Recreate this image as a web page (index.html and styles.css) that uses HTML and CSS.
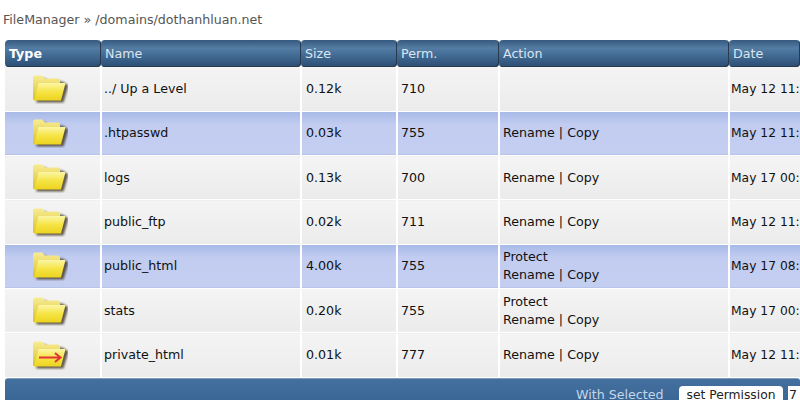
FILE: index.html
```html
<!DOCTYPE html>
<html lang="en">
<head>
<meta charset="utf-8">
<title>FileManager</title>
<link rel="stylesheet" href="styles.css">
</head>
<body>
<svg class="defs" width="0" height="0" aria-hidden="true">
  <defs>
    <linearGradient id="back" x1="0" y1="0" x2="0" y2="1"><stop offset="0" stop-color="#f8ec94"/><stop offset="1" stop-color="#d8c028"/></linearGradient>
    <linearGradient id="front" x1="0" y1="0" x2="0" y2="1"><stop offset="0" stop-color="#fbf6a6"/><stop offset=".5" stop-color="#f6e445"/><stop offset="1" stop-color="#ecd31e"/></linearGradient>
    <filter id="soft" x="-20%" y="-20%" width="140%" height="140%"><feGaussianBlur stdDeviation="1.1"/></filter>
    <symbol id="folder" viewBox="0 0 36 30">
      <path d="M3 6 L4 3 H12 L15 6 H29 L35 10 L30 27 H3 Z" fill="#3f3620" opacity=".8" filter="url(#soft)" transform="translate(1.500 1.500)"/>
      <path d="M1 4 Q1 1.500 3 1.500 H10 L13 4.500 H26 Q28 4.500 28 6.500 V12 H6 L4 26 H2 Q1 26 1 25 Z" fill="url(#back)"/>
      <path d="M6.500 9 H33.500 L29 26.500 H2 Z" fill="url(#front)"/>
    </symbol>
  </defs>
</svg>
<main class="manager">
  <p class="crumb">FileManager » /domains/dothanhluan.net</p>
  <table class="files">
    <colgroup>
      <col class="c-type"><col class="c-name"><col class="c-size"><col class="c-perm"><col class="c-action"><col class="c-date">
    </colgroup>
    <thead>
      <tr><th class="type-head">Type</th><th>Name</th><th>Size</th><th>Perm.</th><th>Action</th><th>Date</th></tr>
    </thead>
    <tbody>
      <tr class="plain"><td class="icon"><svg class="folder"><use href="#folder"/></svg></td><td>../ Up a Level</td><td>0.12k</td><td>710</td><td></td><td>May 12 11:</td></tr>
      <tr class="picked"><td class="icon"><svg class="folder"><use href="#folder"/></svg></td><td>.htpasswd</td><td>0.03k</td><td>755</td><td>Rename | Copy</td><td>May 12 11:</td></tr>
      <tr class="plain"><td class="icon"><svg class="folder"><use href="#folder"/></svg></td><td>logs</td><td>0.13k</td><td>700</td><td>Rename | Copy</td><td>May 17 00:</td></tr>
      <tr class="plain"><td class="icon"><svg class="folder"><use href="#folder"/></svg></td><td>public_ftp</td><td>0.02k</td><td>711</td><td>Rename | Copy</td><td>May 12 11:</td></tr>
      <tr class="picked"><td class="icon"><svg class="folder"><use href="#folder"/></svg></td><td>public_html</td><td>4.00k</td><td>755</td><td>Protect<br>Rename | Copy</td><td>May 17 08:</td></tr>
      <tr class="plain"><td class="icon"><svg class="folder"><use href="#folder"/></svg></td><td>stats</td><td>0.20k</td><td>755</td><td>Protect<br>Rename | Copy</td><td>May 17 00:</td></tr>
      <tr class="plain"><td class="icon"><svg class="folder" viewBox="0 0 36 30"><use href="#folder" width="36" height="30"/><path class="arrow" d="M7 17.500 H28 M23 13 L28.500 17.500 L23 22"/></svg></td><td>private_html</td><td>0.01k</td><td>777</td><td>Rename | Copy</td><td>May 12 11:</td></tr>
    </tbody>
  </table>
  <div class="footer">
    <span class="with">With Selected</span>
    <button class="btn" type="button">set Permission</button>
    <input class="perm" type="text" value="7" aria-label="Permission">
  </div>
</main>
</body>
</html>
```
FILE: styles.css
```css
html, body { margin: 0; height: 400px; overflow: hidden; background: #fff; }
.defs { position: absolute; }
.manager { width: 795px; padding: 0 0 0 5px; font: 12.65px/18px "DejaVu Sans", sans-serif; color: #111; }
.crumb { margin: 0 0 0 -2px; padding-top: 11px; height: 40px; box-sizing: border-box; color: #555; }
.files { table-layout: fixed; width: 795px; border-collapse: collapse; }
.c-type { width: 96px; }
.c-name { width: 200px; }
.c-size { width: 96px; }
.c-perm { width: 102px; }
.c-action { width: 230px; }
.c-date { width: 71px; }
th { height: 27px; padding: 0 0 0 4px; text-align: left; font-weight: 400; color: #dbe5ef; background: linear-gradient(#35597f, #557ca3 30%, #46709a 50%, #2b4d73); border-radius: 4px; box-shadow: inset -1px -1px 0 #2a3a4c; box-sizing: border-box; }
.type-head { font-weight: 700; color: #fff; }
td { height: 44.3px; padding: 0 0 0 3px; border-left: 2px solid #fff; border-bottom: 1px solid #fff; box-sizing: border-box; white-space: nowrap; }
td:first-child { border-left: 0; }
td:nth-child(2) { padding-left: 2px; }
td:nth-child(3) { padding-left: 4px; }
td:last-child { padding-left: 1px; font-size: 12.3px; }
.plain td { background: linear-gradient(#f4f4f4, #ebebeb); }
.picked td { background: linear-gradient(#a6b9e6, #c1ccf0 30%, #c4cef1); }
td.icon { padding: 0 5px 0 0; text-align: center; }
.folder { display: block; width: 36px; height: 30px; margin: 0 auto; }
.arrow { fill: none; stroke: #e23438; stroke-width: 2; }
.footer { display: flex; align-items: flex-start; height: 22px; overflow: hidden; padding: 7px 0 0 571px; box-sizing: border-box; border-top: 1px solid #7f9ab6; background: linear-gradient(#43709f, #3a6796); border-radius: 3px 3px 0 0; }
.with { flex: none; width: 86px; color: #c5d6e8; white-space: nowrap; }
.btn { flex: none; margin: 0 0 0 17px; padding: 0; width: 104px; height: 18px; border: 0; border-radius: 4px 4px 0 0; background: #fff; font: inherit; font-size: 12.3px; line-height: 18px; color: #222; }
.perm { flex: none; margin-left: 5px; width: 12px; height: 18px; padding: 0 0 0 1px; border: 0; box-sizing: border-box; font: inherit; color: #222; }
```
